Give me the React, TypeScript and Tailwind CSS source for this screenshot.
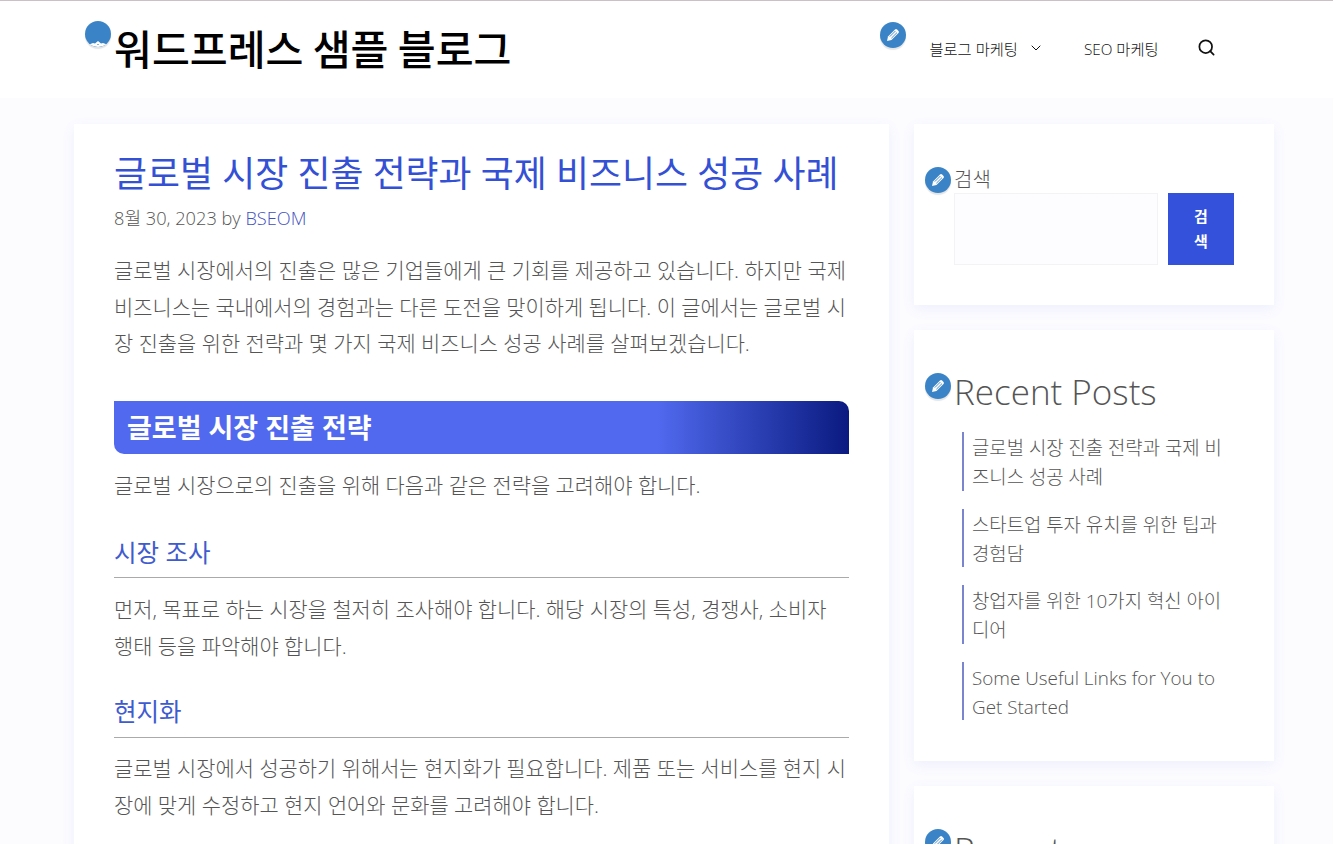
import { ChevronDown, Search } from "lucide-react";

const FONT = "font-['Open_Sans','Noto_Sans_CJK_KR',sans-serif]";

const posts = [
	"글로벌 시장 진출 전략과 국제 비즈니스 성공 사례",
	"스타트업 투자 유치를 위한 팁과 경험담",
	"창업자를 위한 10가지 혁신 아이디어",
	"Some Useful Links for You to Get Started",
];

const PinBadge = ({ className }: { className: string }) => (
	<span className={`absolute flex h-[26px] w-[26px] items-center justify-center rounded-full bg-[#3a83c6] shadow-[0_2px_1px_#e4e4e4] ${className}`}>
		<svg width="18" height="18" viewBox="0 0 18 18" fill="none">
			<path d="M3 15l1-4.500 7-7a1.500 1.500 0 0 1 2.100 0l1.400 1.400a1.500 1.500 0 0 1 0 2.100l-7 7L3 15z" fill="#fff" />
			<path d="M5.800 10.600l5.600-5.600M7.400 12.200l5.600-5.600" stroke="#3a83c6" strokeWidth=".9" />
		</svg>
	</span>
);

const LogoBadge = () => (
	<span className="absolute left-[-29px] top-[-1px] h-[26px] w-[26px] overflow-hidden rounded-full bg-[#3a83c6] shadow-[0_2px_1px_#e4e4e4]">
		<svg width="26" height="26" viewBox="0 0 26 26" className="absolute left-0 top-0">
			<path d="M4 23.500c3 1.500 6 2.500 9 2.500s6-1 9-2.500l-4-1.500-2 .5-3-2.500-3 2.500-2-.5z" fill="#fff" />
			<path d="M12 24l1-1.300 1 1.300z" fill="#3a83c6" />
		</svg>
	</span>
);

const Card = ({ children, className }: { children: React.ReactNode; className: string }) => (
	<div className={`bg-white shadow-[0_4px_12px_rgba(90,110,220,0.09)] ${className}`}>{children}</div>
);

const App: React.FC = () => (
	<div className={`h-[844px] overflow-hidden border-t border-[#cdbfc6] bg-[#fcfcff] text-[#555] ${FONT}`}>
		<header className="flex h-[97px] bg-white pl-[114px]">
			<div className="relative mt-[21px] h-fit">
				<LogoBadge />
				<div className="text-[41.200px] font-medium leading-[50px] text-black font-['Noto_Sans_CJK_KR',sans-serif]">워드프레스 샘플 블로그</div>
			</div>
			<nav className="relative ml-[418px] flex h-fit items-center pt-[37px] text-[15.300px] font-light text-[#111]">
				<PinBadge className="left-[-49px] top-[21px]" />
				<span>블로그 마케팅</span>
				<ChevronDown size={16} strokeWidth={1.5} className="mb-[2px] ml-[10px]" />
				<span className="ml-[40px]">SEO 마케팅</span>
				<Search size={19} strokeWidth={2.2} className="mb-[3px] ml-[38px] text-[#111]" />
			</nav>
		</header>

		<main className="flex items-start gap-[25px] pl-[74px] pt-[26px]">
			<Card className="h-[800px] w-[815px] px-10 pt-[27px]">
				<h1 className="text-[35.850px] font-normal leading-[46px] text-[#3450d4]">글로벌 시장 진출 전략과 국제 비즈니스 성공 사례</h1>
				<div className="mt-[9px] text-[18.200px] font-light leading-[24px]">
					8월 30, 2023 by <span className="text-[#3f50c0]">BSEOM</span>
				</div>
				<p className="mt-[22px] text-[20.900px] font-light leading-[36.500px]">
					글로벌 시장에서의 진출은 많은 기업들에게 큰 기회를 제공하고 있습니다. 하지만 국제 비즈니스는 국내에서의 경험과는 다른 도전을 맞이하게 됩니다. 이 글에서는 글로벌 시장 진출을 위한 전략과 몇 가지 국제 비즈니스 성공 사례를 살펴보겠습니다.
				</p>
				<h2 className="mt-[39px] h-[53px] rounded-tr-[10px] rounded-bl-[10px] bg-[linear-gradient(90deg,#5069ee_0%,#5069ee_74%,#0a1a80_100%)] pl-[13px] text-[27px] font-semibold leading-[53px] text-white">글로벌 시장 진출 전략</h2>
				<p className="mt-[13px] text-[20.900px] font-light leading-[36px]">글로벌 시장으로의 진출을 위해 다음과 같은 전략을 고려해야 합니다.</p>
				<h3 className="mt-[33px] border-b border-[#aaa] pb-[7px] text-[24.500px] font-normal leading-[34px] text-[#3f5bd0]">시장 조사</h3>
				<p className="mt-[13px] text-[20.900px] font-light leading-[37px]">먼저, 목표로 하는 시장을 철저히 조사해야 합니다. 해당 시장의 특성, 경쟁사, 소비자 행태 등을 파악해야 합니다.</p>
				<h3 className="mt-[30px] border-b border-[#aaa] pb-[8px] text-[24.500px] font-normal leading-[34px] text-[#3f5bd0]">현지화</h3>
				<p className="mt-[12px] text-[20.900px] font-light leading-[37px]">글로벌 시장에서 성공하기 위해서는 현지화가 필요합니다. 제품 또는 서비스를 현지 시장에 맞게 수정하고 현지 언어와 문화를 고려해야 합니다.</p>
			</Card>

			<aside className="flex w-[360px] flex-col gap-[25px]">
				<Card className="h-[181px] pl-10 pt-[43px]">
					<div className="relative text-[20px] font-light leading-[26px]">
						<PinBadge className="left-[-29px] top-0" />
						검색
					</div>
					<div className="flex gap-[10px]">
						<div className="h-[72px] w-[204px] border border-[#f3f3f6] bg-[#fdfdff]" />
						<div className="flex h-[72px] w-[66px] items-center justify-center bg-[#3451db] px-5 text-center text-[15px] font-semibold leading-[25px] text-white">검색</div>
					</div>
				</Card>
				<Card className="h-[431px] pl-10 pt-[40px]">
					<div className="relative text-[35px] font-light leading-[44px]">
						<PinBadge className="left-[-29px] top-[3px]" />
						Recent Posts
					</div>
					<ul className="mt-[18px] flex flex-col gap-[18px] pl-2">
						{posts.map((post) => (
							<li key={post} className="h-[58.600px] w-[270px] border-l-2 border-[#7b84cf] pl-2 pt-[2px] text-[18.850px] font-light leading-[29.300px]">{post}</li>
						))}
					</ul>
				</Card>
				<Card className="h-[300px] pl-10 pt-[42px]">
					<div className="relative text-[35px] font-light leading-[44px]">
						<PinBadge className="left-[-29px] top-[1px]" />
						Recent
					</div>
				</Card>
			</aside>
		</main>
	</div>
);

export default App;
